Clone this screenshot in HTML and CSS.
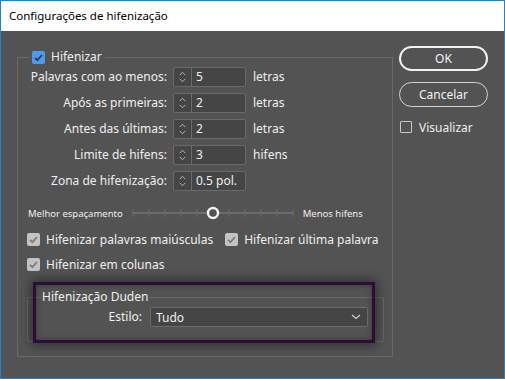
FILE: index.html
```html
<!DOCTYPE html>
<html lang="pt">
<head>
    <meta charset="UTF-8">
    <title>Configurações de hifenização</title>
    <link rel="stylesheet" href="styles.css">
</head>
<body>
    <div class="window">
        <div class="titlebar">Configurações de hifenização</div>

        <div class="dialog">
            <fieldset class="group">
                <legend class="group-title">
                    <span class="check check-on"><svg width="13" height="13" viewBox="0 0 13 13"><path d="M3 6.8 L5.4 9.2 L10 4" fill="none" stroke="#3a3a3a" stroke-width="1.8"/></svg></span>
                    Hifenizar
                </legend>

                <div class="fields">
                    <label class="field-label">Palavras com ao menos:</label>
                    <div class="spinner">
                        <span class="arrows"><svg width="18" height="18" viewBox="0 0 18 18"><path d="M6 7 L9 4 L12 7 M6 11 L9 14 L12 11" fill="none" stroke="#bdbdbd" stroke-width="1"/></svg></span>
                        <span class="value">5</span>
                    </div>
                    <span class="unit">letras</span>

                    <label class="field-label">Após as primeiras:</label>
                    <div class="spinner">
                        <span class="arrows"><svg width="18" height="18" viewBox="0 0 18 18"><path d="M6 7 L9 4 L12 7 M6 11 L9 14 L12 11" fill="none" stroke="#bdbdbd" stroke-width="1"/></svg></span>
                        <span class="value">2</span>
                    </div>
                    <span class="unit">letras</span>

                    <label class="field-label">Antes das últimas:</label>
                    <div class="spinner">
                        <span class="arrows"><svg width="18" height="18" viewBox="0 0 18 18"><path d="M6 7 L9 4 L12 7 M6 11 L9 14 L12 11" fill="none" stroke="#bdbdbd" stroke-width="1"/></svg></span>
                        <span class="value">2</span>
                    </div>
                    <span class="unit">letras</span>

                    <label class="field-label">Limite de hifens:</label>
                    <div class="spinner">
                        <span class="arrows"><svg width="18" height="18" viewBox="0 0 18 18"><path d="M6 7 L9 4 L12 7 M6 11 L9 14 L12 11" fill="none" stroke="#bdbdbd" stroke-width="1"/></svg></span>
                        <span class="value">3</span>
                    </div>
                    <span class="unit">hifens</span>

                    <label class="field-label">Zona de hifenização:</label>
                    <div class="spinner">
                        <span class="arrows"><svg width="18" height="18" viewBox="0 0 18 18"><path d="M6 7 L9 4 L12 7 M6 11 L9 14 L12 11" fill="none" stroke="#bdbdbd" stroke-width="1"/></svg></span>
                        <span class="value">0.5 pol.</span>
                    </div>
                    <span class="unit"></span>
                </div>

                <div class="slider-row">
                    <span class="slider-label">Melhor espaçamento</span>
                    <svg class="slider" width="164" height="14" viewBox="0 0 164 14">
                        <line x1="2" y1="7" x2="162" y2="7" stroke="#6c6c6c" stroke-width="2"/>
                        <path d="M2 3V11 M18 3V11 M34 3V11 M50 3V11 M66 3V11 M98 3V11 M114 3V11 M130 3V11 M146 3V11 M162 3V11" stroke="#6c6c6c" stroke-width="1"/>
                        <circle cx="82" cy="7" r="5" fill="#535353" stroke="#f4f4f4" stroke-width="2.4"/>
                    </svg>
                    <span class="slider-label">Menos hifens</span>
                </div>

                <div class="checks">
                    <div class="check-row">
                        <span class="check-item"><span class="check check-gray"><svg width="13" height="13" viewBox="0 0 13 13"><path d="M3 6.8 L5.4 9.2 L10 4" fill="none" stroke="#7c7c7c" stroke-width="1.8"/></svg></span>Hifenizar palavras maiúsculas</span>
                        <span class="check-item"><span class="check check-gray"><svg width="13" height="13" viewBox="0 0 13 13"><path d="M3 6.8 L5.4 9.2 L10 4" fill="none" stroke="#7c7c7c" stroke-width="1.8"/></svg></span>Hifenizar última palavra</span>
                    </div>
                    <div class="check-row">
                        <span class="check-item"><span class="check check-gray"><svg width="13" height="13" viewBox="0 0 13 13"><path d="M3 6.8 L5.4 9.2 L10 4" fill="none" stroke="#7c7c7c" stroke-width="1.8"/></svg></span>Hifenizar em colunas</span>
                    </div>
                </div>

                <div class="duden-wrap">
                    <fieldset class="duden">
                        <legend class="duden-title">Hifenização Duden</legend>
                        <div class="duden-row">
                            <label class="field-label">Estilo:</label>
                            <div class="select">
                                <span>Tudo</span>
                                <svg width="10" height="6" viewBox="0 0 10 6"><path d="M1 1 L5 4.5 L9 1" fill="none" stroke="#d0d0d0" stroke-width="1.2"/></svg>
                            </div>
                        </div>
                    </fieldset>
                    <div class="highlight"></div>
                </div>
            </fieldset>

            <div class="side">
                <button class="btn btn-default">OK</button>
                <button class="btn">Cancelar</button>
                <label class="preview"><span class="check check-empty"></span>Visualizar</label>
            </div>
        </div>
    </div>
</body>
</html>
```

FILE: styles.css
```css
* {
    box-sizing: border-box;
    margin: 0;
    padding: 0;
}

body {
    background: #535353;
    font-family: 'Noto Sans', 'Open Sans', sans-serif;
    font-size: 12px;
    color: #efefef;
}

.window {
    width: 505px;
    height: 379px;
    border: 1px solid #1883d7;
    background: #535353;
}

.titlebar {
    height: 30px;
    background: #fff;
    color: #000;
    font-size: 11.5px;
    line-height: 30px;
    padding-left: 8px;
}

.dialog {
    display: flex;
    padding: 15px 0 0 16px;
}

.group {
    width: 376px;
    min-width: 0;
    margin-top: 3px;
    border: 1px solid #696969;
    padding: 0 0 14px 0;
}

.group-title {
    display: flex;
    align-items: center;
    gap: 6px;
    margin-left: 11px;
    padding: 0 3px;
    height: 16px;
    line-height: 16px;
}

.check {
    display: inline-flex;
    width: 13px;
    height: 13px;
    border-radius: 2px;
    flex: none;
}

.check-on {
    background: #4b9bf5;
}

.check-gray {
    background: #c3c3c3;
}

.check-empty {
    width: 12px;
    height: 12px;
    border: 1px solid #c8c8c8;
    border-radius: 1px;
}

.fields {
    display: grid;
    grid-template-columns: 149px 73px auto;
    grid-auto-rows: 20px;
    column-gap: 6px;
    row-gap: 6px;
    margin-top: 2px;
}

.field-label {
    text-align: right;
    line-height: 20px;
    white-space: nowrap;
}

.spinner {
    display: flex;
    border: 1px solid #6a6a6a;
    border-radius: 2px;
    background: #454545;
}

.arrows {
    width: 18px;
    border-right: 1px solid #6a6a6a;
    display: flex;
    align-items: center;
}

.value {
    padding-left: 4px;
    line-height: 18px;
}

.unit {
    line-height: 20px;
    margin-left: 1px;
}

.slider-row {
    display: flex;
    align-items: center;
    margin-top: 15px;
    padding-left: 10px;
    height: 14px;
    white-space: nowrap;
}

.slider-label {
    font-size: 9.5px;
}

.slider {
    flex: none;
    margin: 0 8px 0 8px;
}

.checks {
    display: flex;
    flex-direction: column;
    gap: 9px;
    margin-top: 11px;
    padding-left: 9px;
}

.check-row {
    display: flex;
    gap: 12px;
    height: 16px;
    white-space: nowrap;
}

.check-item {
    display: flex;
    align-items: center;
    gap: 6px;
}

.duden-wrap {
    position: relative;
    margin: 17px 8px 0 9px;
}

.duden {
    border: 1px solid #676767;
    border-radius: 2px;
    padding: 2px 14px 14px 0;
    min-width: 0;
}

.duden-title {
    margin-left: 12px;
    padding: 0 2px;
    line-height: 16px;
}

.duden-row {
    display: grid;
    grid-template-columns: 114px 218px;
    column-gap: 8px;
    height: 20px;
}

.select {
    display: flex;
    align-items: center;
    justify-content: space-between;
    border: 1px solid #6c6c6c;
    border-radius: 2px;
    background: #454545;
    padding: 0 6px 0 5px;
}

.highlight {
    position: absolute;
    top: -7px;
    left: 6px;
    width: 342px;
    height: 61px;
    border: 3px solid #2b0d37;
    box-shadow: 0 0 10px 2px rgba(0, 0, 0, 0.45), inset 0 0 6px rgba(0, 0, 0, 0.35);
}

.side {
    display: flex;
    flex-direction: column;
    width: 89px;
    margin-left: 6px;
}

.btn {
    height: 25px;
    border: 1px solid #d4d4d4;
    border-radius: 13px;
    background: transparent;
    color: #f2f2f2;
    font-family: inherit;
    font-size: 12px;
}

.btn-default {
    border: 2px solid #f2f2f2;
    margin-bottom: 11px;
}

.preview {
    display: flex;
    align-items: center;
    gap: 7px;
    margin: 14px 0 0 1px;
    height: 12px;
}
```
